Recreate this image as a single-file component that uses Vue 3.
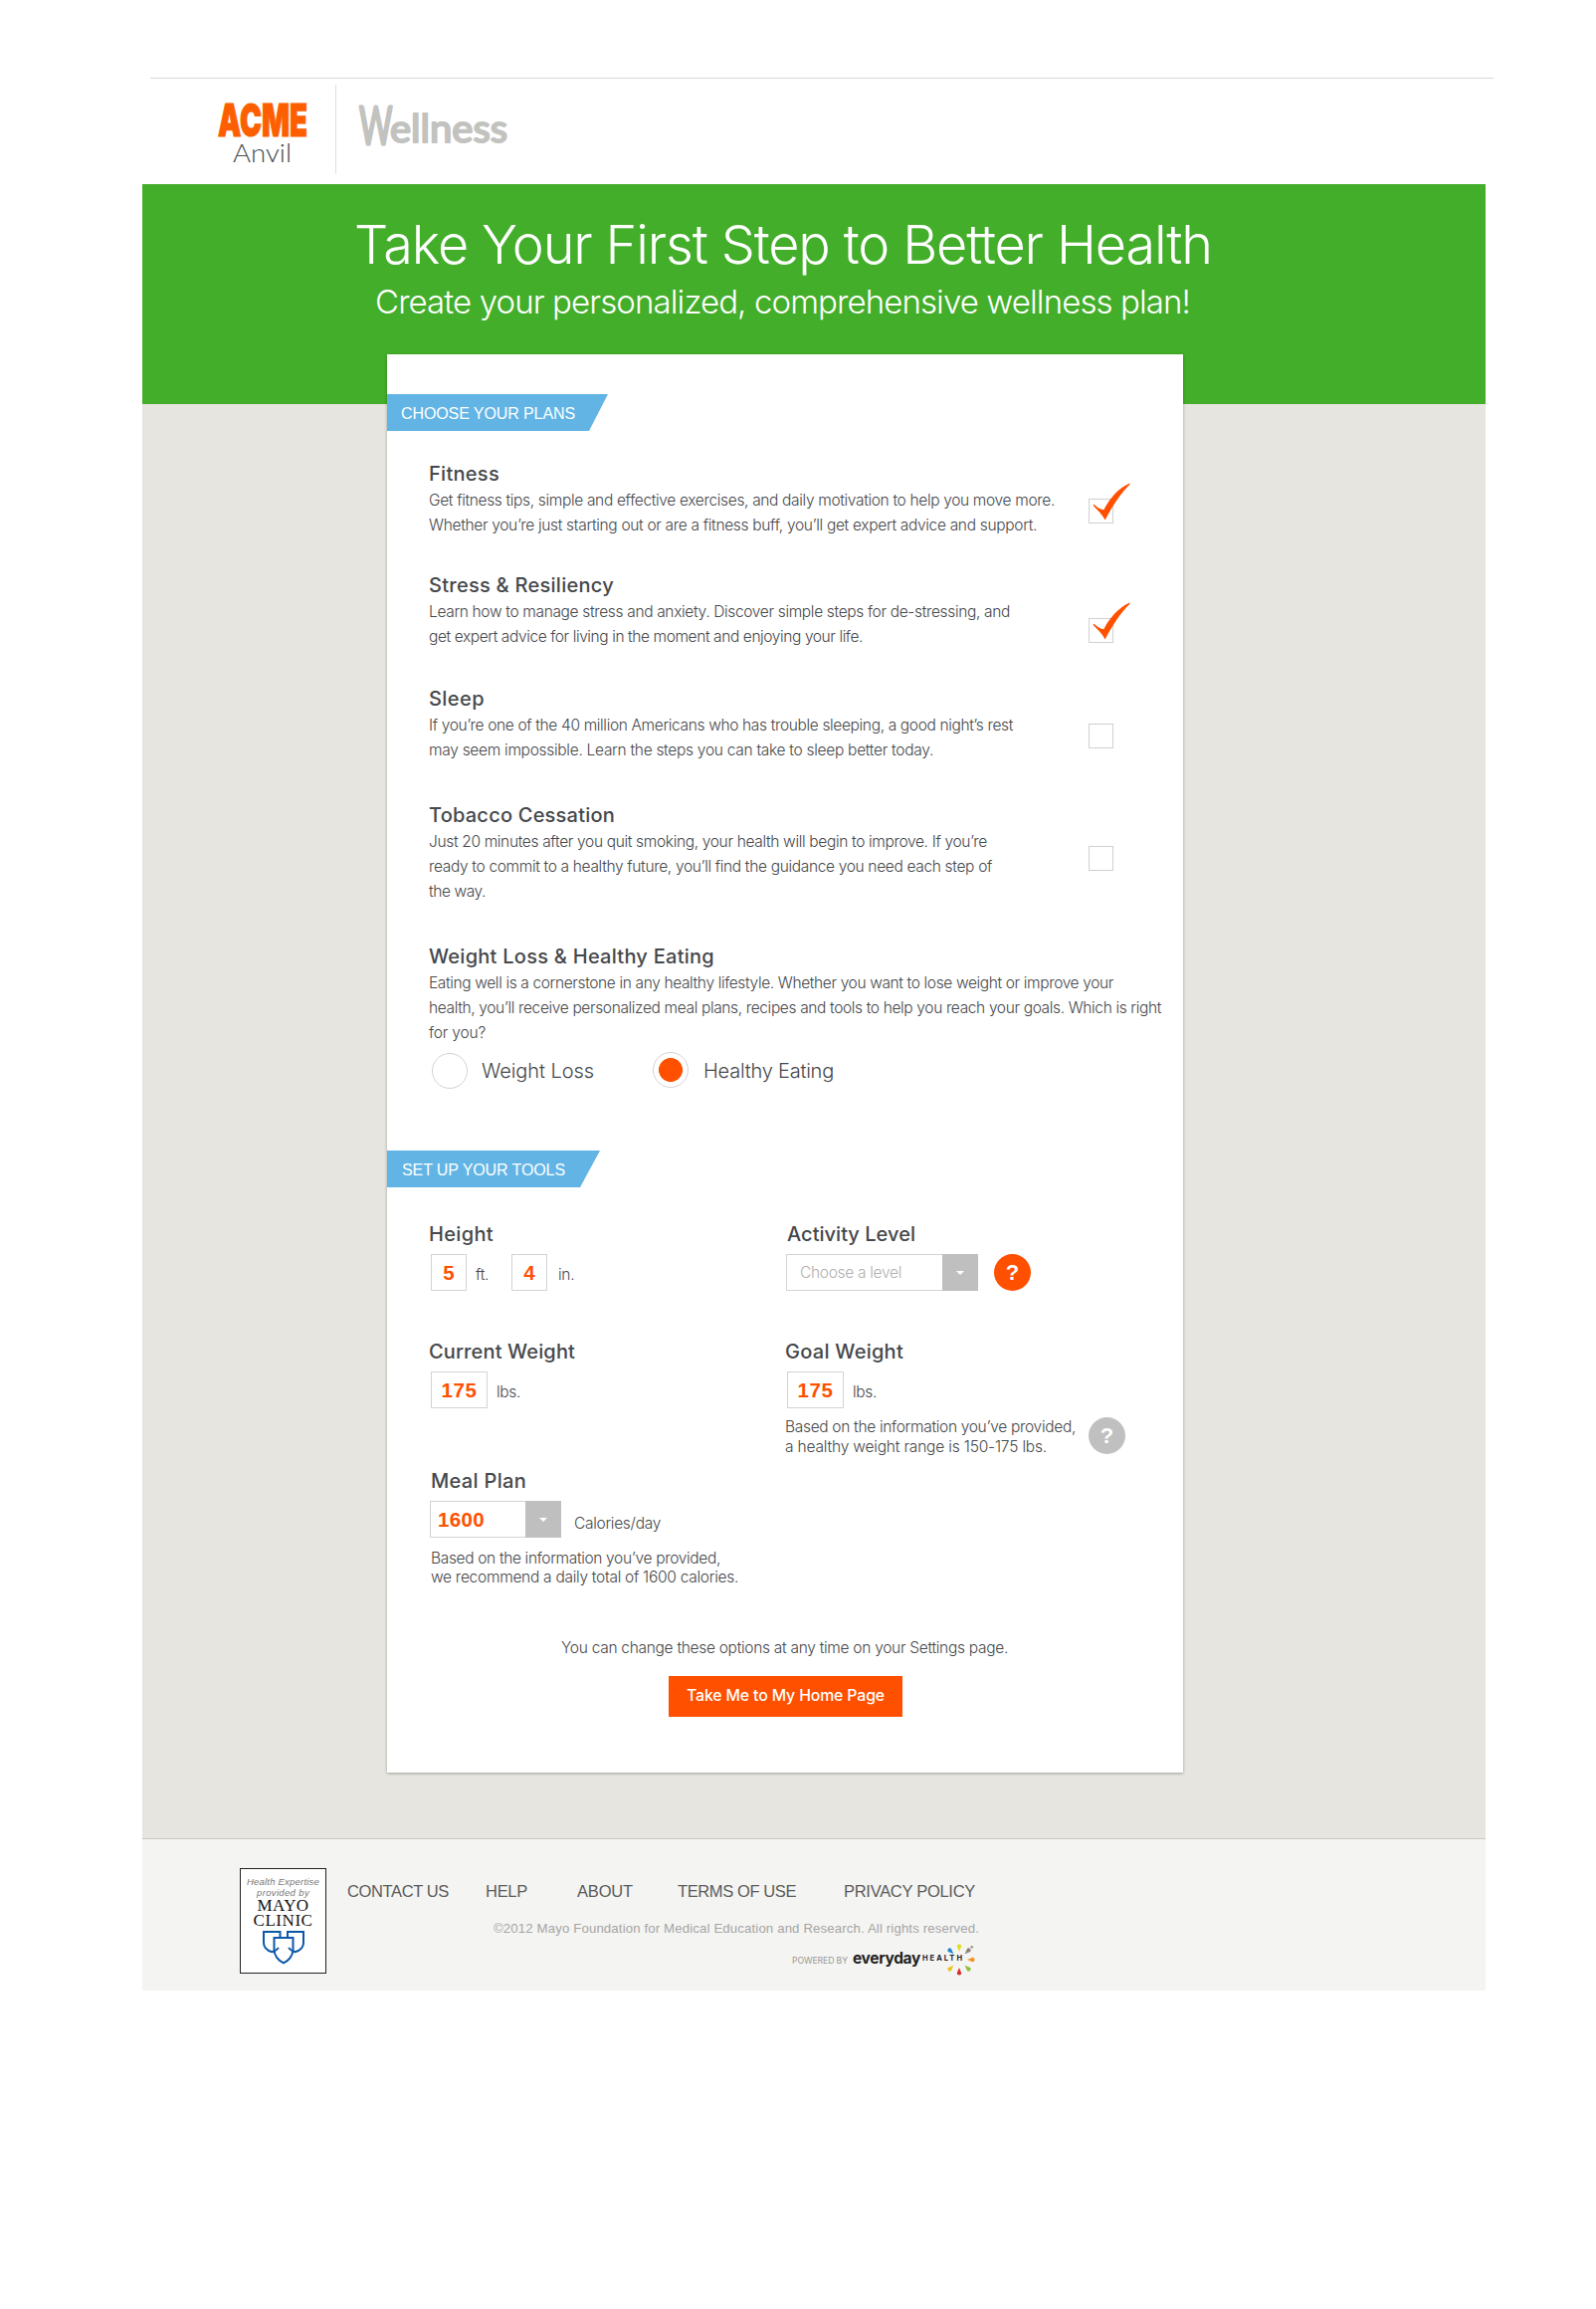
<script setup>
// Tracks a single line of copy so that it fills the given width in pixels.
const vFit = {
  mounted(el, { value }) {
    const count = el.textContent.trim().length
    const width = el.getBoundingClientRect().width
    el.style.letterSpacing = (value - width) / count + 'px'
  },
}

const plans = [
  {
    title: 'Fitness', w: 71, checked: true,
    lines: [
      ['Get fitness tips, simple and effective exercises, and daily motivation to help you move more.', 629],
      ['Whether you’re just starting out or are a fitness buff, you’ll get expert advice and support.', 611],
    ],
  },
  {
    title: 'Stress & Resiliency', w: 186, checked: true,
    lines: [
      ['Learn how to manage stress and anxiety. Discover simple steps for de-stressing, and', 584],
      ['get expert advice for living in the moment and enjoying your life.', 436],
    ],
  },
  {
    title: 'Sleep', w: 56, checked: false,
    lines: [
      ['If you’re one of the 40 million Americans who has trouble sleeping, a good night’s rest', 587],
      ['may seem impossible. Learn the steps you can take to sleep better today.', 507],
    ],
  },
  {
    title: 'Tobacco Cessation', w: 187, checked: false,
    lines: [
      ['Just 20 minutes after you quit smoking, your health will begin to improve. If you’re', 561],
      ['ready to commit to a healthy future, you’ll find the guidance you need each step of', 566],
      ['the way.', 57],
    ],
  },
  {
    title: 'Weight Loss & Healthy Eating', w: 287,
    lines: [
      ['Eating well is a cornerstone in any healthy lifestyle. Whether you want to lose weight or improve your', 688],
      ['health, you’ll receive personalized meal plans, recipes and tools to help you reach your goals. Which is right', 736],
      ['for you?', 57],
    ],
  },
]

const links = [
  ['CONTACT US', 102, 'contact'],
  ['HELP', 42, 'help'],
  ['ABOUT', 56, 'about'],
  ['TERMS OF USE', 119, 'terms'],
  ['PRIVACY POLICY', 132, 'privacy'],
]

const petals = [
  ['#dde01b', 0], ['#8f8277', 45], ['#f7921e', 90], ['#8dbf3a', 135],
  ['#d92b2f', 180], ['#e8c51e', 225], ['#2489cf', 315],
]
</script>

<template>
  <div class="page">
    <div class="hairline"></div>
    <header class="header">
      <svg class="acme" width="92" height="66" viewBox="0 0 92 66">
        <text class="acme-name" x="0" y="34" textLength="90" lengthAdjust="spacingAndGlyphs">ACME</text>
        <text class="acme-sub" x="15" y="60" textLength="59" lengthAdjust="spacingAndGlyphs">Anvil</text>
      </svg>
      <div class="divider"></div>
      <svg class="wellness" width="156" height="56" viewBox="0 0 156 56">
        <text class="script script-cap" transform="translate(2 45) scale(.62 1)">W</text>
        <text class="script" x="33" y="43" textLength="118" lengthAdjust="spacingAndGlyphs">ellness</text>
      </svg>
    </header>

    <section class="hero">
      <h1><span v-fit="862" class="fit">Take Your First Step to Better Health</span></h1>
      <p><span v-fit="819" class="fit">Create your personalized, comprehensive wellness plan!</span></p>
    </section>

    <main class="backdrop">
      <div class="card">
        <h2 class="ribbon ribbon-plans"><span v-fit="175" class="fit">CHOOSE YOUR PLANS</span></h2>
        <div class="plans">
          <div v-for="plan in plans" :key="plan.title" class="plan">
            <div class="plan-copy">
              <h3><span v-fit="plan.w" class="fit">{{ plan.title }}</span></h3>
              <div v-for="line in plan.lines" :key="line[0]" class="line">
                <span v-fit="line[1]" class="fit">{{ line[0] }}</span>
              </div>
            </div>
            <div v-if="plan.checked !== undefined" class="checkbox">
              <svg v-if="plan.checked" class="tick" width="40" height="40" viewBox="0 0 40 40">
                <path d="M1.500 21.800 L2.500 20.800 C6 24 9 25.800 12.300 26.300 C18 15 27 4.500 38.500 -0.500 L38.500 0.800 C30 9 21 22 13.700 36.500 C10.500 30.500 6 26.500 1.500 21.800Z" fill="#ff5000" />
              </svg>
            </div>
          </div>
        </div>
        <div class="radios">
          <span class="radio"></span>
          <span class="radio-label"><span v-fit="113" class="fit">Weight Loss</span></span>
          <span class="radio radio-on"></span>
          <span class="radio-label"><span v-fit="131" class="fit">Healthy Eating</span></span>
        </div>

        <h2 class="ribbon ribbon-tools"><span v-fit="164" class="fit">SET UP YOUR TOOLS</span></h2>
        <div class="tools">
          <div class="tool">
            <h3><span v-fit="65" class="fit">Height</span></h3>
            <div class="controls indent">
              <span class="box digit">5</span><span class="unit ft">ft.</span>
              <span class="box digit">4</span><span class="unit inch">in.</span>
            </div>
          </div>
          <div class="tool right activity">
            <h3><span v-fit="129" class="fit">Activity Level</span></h3>
            <div class="controls">
              <span class="select level"><span v-fit="102" class="fit">Choose a level</span><i class="arrow"></i></span>
              <span class="help orange">?</span>
            </div>
          </div>
          <div class="tool">
            <h3><span v-fit="147" class="fit">Current Weight</span></h3>
            <div class="controls indent">
              <span class="box weight"><span v-fit="36" class="fit">175</span></span>
              <span class="unit lbs">lbs.</span>
            </div>
          </div>
          <div class="tool right">
            <h3><span v-fit="119" class="fit">Goal Weight</span></h3>
            <div class="controls indent">
              <span class="box weight"><span v-fit="36" class="fit">175</span></span>
              <span class="unit lbs">lbs.</span>
            </div>
            <div class="goal-note">
              <div class="note">
                <div><span v-fit="292" class="fit">Based on the information you’ve provided,</span></div>
                <div><span v-fit="263" class="fit">a healthy weight range is 150-175 lbs.</span></div>
              </div>
              <span class="help">?</span>
            </div>
          </div>
          <div class="tool meal">
            <h3><span v-fit="96" class="fit">Meal Plan</span></h3>
            <div class="controls">
              <span class="select calories"><span v-fit="47" class="fit">1600</span><i class="arrow"></i></span>
              <span class="unit per-day"><span v-fit="87" class="fit">Calories/day</span></span>
            </div>
            <div class="note">
              <div><span v-fit="291" class="fit">Based on the information you’ve provided,</span></div>
              <div><span v-fit="309" class="fit">we recommend a daily total of 1600 calories.</span></div>
            </div>
          </div>
        </div>

        <p class="settings"><span v-fit="449" class="fit">You can change these options at any time on your Settings page.</span></p>
        <button class="cta"><span v-fit="199" class="fit">Take Me to My Home Page</span></button>
      </div>
    </main>

    <footer class="footer">
      <div class="mayo">
        <div class="mayo-lead"><span v-fit="73" class="fit">Health Expertise</span></div>
        <div class="mayo-lead"><span v-fit="53" class="fit">provided by</span></div>
        <div class="mayo-name"><span v-fit="52" class="fit">MAYO</span></div>
        <div class="mayo-name"><span v-fit="60" class="fit">CLINIC</span></div>
        <svg width="44" height="36" viewBox="0 0 44 36" fill="none" stroke="#0b57a8" stroke-width="2">
          <path d="M18.500 7V2H2v11c0 5 4 8 8.500 9.300 3-1 5-2.300 6.500-4.300" />
          <path d="M26 7V2h16v11c0 5-4 8-8.500 9.300-3-1-5-2.300-6.500-4.300" />
          <path d="M12.500 8h19v12c0 6-4.500 11-9.500 13.300C17 31 12.500 26 12.500 20Z" />
        </svg>
      </div>
      <div class="foot-main">
        <nav>
          <a v-for="link in links" :key="link[0]" :class="'link-' + link[2]"><span v-fit="link[1]" class="fit">{{ link[0] }}</span></a>
        </nav>
        <div class="copyright"><span v-fit="488" class="fit">©2012 Mayo Foundation for Medical Education and Research. All rights reserved.</span></div>
        <div class="powered">
          <span class="powered-by"><span v-fit="56" class="fit">POWERED BY</span></span>
          <span class="everyday"><span v-fit="68" class="fit">everyday</span></span>
          <span class="health"><span v-fit="42" class="fit">HEALTH</span>
            <svg class="burst" width="34" height="34" viewBox="-17 -17 34 34">
              <path v-for="p in petals" :key="p[1]" :fill="p[0]" :transform="`rotate(${p[1]})`" d="M0 -8 L-2.200 -13.500 Q-2.200 -15.500 0 -15.500 Q2.200 -15.500 2.200 -13.500Z" />
              <circle cx="12.700" cy="-12.700" r="1.400" fill="#a69b92" />
            </svg>
          </span>
        </div>
      </div>
    </footer>
  </div>
</template>

<style>
body { background: #fff; }
</style>

<style scoped>
.page { width: 1604px; height: 2320px; padding-top: 78px; box-sizing: border-box; font-family: Inter, "Liberation Sans", sans-serif; font-weight: 300; font-variant-ligatures: none; color: #46484b; overflow: hidden; }
h1, h2, h3, p { margin: 0; font-weight: inherit; }
.fit { display: inline-block; white-space: nowrap; }
.hairline { width: 1350px; height: 1px; margin-left: 151px; background: #d8d8d8; }
.header { display: flex; height: 106px; padding-left: 219px; }
.acme { margin-top: 24px; flex: none; overflow: visible; }
.acme-name { font: 900 45.500px Inter, sans-serif; fill: #fd5f00; stroke: #fd5f00; stroke-width: 1.200px; }
.acme-sub { font: 300 25px Lato, sans-serif; fill: #4b4d50; }
.divider { width: 1px; height: 90px; margin: 6px 0 0 26px; background: #dedede; }
.wellness { margin: 21px 0 0 21px; flex: none; overflow: visible; }
.script { font: 400 38px Lato, sans-serif; fill: #c2c2bf; stroke: #c2c2bf; stroke-width: 2px; stroke-linejoin: round; }
.script-cap { font-size: 52px; stroke-width: 3px; }

.hero { width: 1350px; height: 221px; margin-left: 143px; background: #43ae2a; color: #fff; }
.hero h1 { padding: 28px 0 0 213px; font-size: 54px; line-height: 66px; font-weight: 300; }
.hero p { padding: 4px 0 0 234px; font-size: 33px; line-height: 40px; font-weight: 300; }

.backdrop { width: 1350px; height: 1441px; margin-left: 143px; background: #e6e5e0; display: flow-root; }
.card { display: flow-root; width: 800px; height: 1425px; margin: -50px 0 0 246px; background: #fff; box-shadow: 0 1px 3px rgba(0, 0, 0, .3); }
.ribbon { height: 37px; font: 400 16px/39px "Liberation Sans", sans-serif; color: #fff; background: #62b4e5; box-sizing: border-box; }
.ribbon-plans { width: 222px; margin-top: 40px; padding-left: 14px; clip-path: polygon(0 0, 100% 0, 203px 100%, 0 100%); }
.ribbon-tools { width: 214px; padding-left: 15px; clip-path: polygon(0 0, 100% 0, 194px 100%, 0 100%); }

h3 { font-size: 20px; line-height: 26px; font-weight: 500; }
.plans { display: grid; grid-template-rows: 112px 114px 117px 142px 110px; margin: 30px 0 0 42px; }
.plan { display: flex; }
.plan-copy { width: 663px; flex: none; }
.plan-copy h3 { margin-bottom: 1px; }
.line { height: 25px; font-size: 15.500px; line-height: 25px; }
.checkbox { position: relative; width: 25px; height: 25px; margin-top: 38px; box-sizing: border-box; border: 1px solid #d0d0d0; }
.plan:nth-child(2) .checkbox { margin-top: 46px; }
.plan:nth-child(4) .checkbox { margin-top: 44px; }
.tick { position: absolute; left: 1.500px; top: -16px; overflow: visible; }

.radios { display: flex; height: 98px; padding-left: 45px; }
.radio { width: 36px; height: 36px; box-sizing: border-box; border: 1px solid #d3d3d3; border-radius: 50%; }
.radio-on { margin: -1px 0 0 59px; background: radial-gradient(circle, #ff5000 11.600px, #fff 12.300px); }
.radio-label { width: 127px; padding-left: 14px; box-sizing: border-box; font-size: 20px; line-height: 36px; }
.radio-label:last-child { width: 150px; padding-left: 15px; }

.tools { display: grid; grid-template-columns: 358px 400px; grid-template-rows: 118px 130px 171px; margin: 34px 0 0 42px; }
.activity { padding-left: 1px; }
.activity h3 { padding-left: 1px; }
.controls { display: flex; height: 37px; margin-top: 7px; padding-left: 1px; }
.indent { padding-left: 2px; }
.box { height: 37px; box-sizing: border-box; border: 1px solid #d3d3d3; text-align: center; font: 700 20.500px/36px "Liberation Sans", sans-serif; color: #ff5000; }
.digit { width: 36px; }
.weight { width: 57px; }
.unit { font-size: 15.500px; line-height: 41px; padding-left: 9px; letter-spacing: -.3px; }
.ft { width: 45px; box-sizing: border-box; }
.inch { padding-left: 11px; }
.select { display: flex; justify-content: space-between; box-sizing: border-box; height: 37px; border: 1px solid #d3d3d3; line-height: 35px; }
.level { width: 193px; padding-left: 13px; font-size: 15.500px; color: #b0b0b0; }
.right .controls:not(.indent) { padding-left: 0; }
.calories { width: 132px; padding-left: 7px; font: 700 20.500px/36px "Liberation Sans", sans-serif; color: #ff5000; }
.arrow { width: 36px; height: 37px; margin: -1px; background: #bfbfbf; display: flex; align-items: center; justify-content: center; }
.arrow::before { content: ""; border: 4.500px solid transparent; border-top: 4.500px solid #fff; border-bottom: 0; }
.help { width: 37px; height: 37px; flex: none; border-radius: 50%; background: #c0c0c0; color: #fff; font: 700 22px/37px "Liberation Sans", sans-serif; text-align: center; }
.orange { margin-left: 16px; background: #ff5000; }
.note { margin: 10.500px 0 0 2px; font-size: 15.500px; line-height: 19.500px; }
.goal-note { display: flex; margin-top: 9px; }
.goal-note .note { width: 293px; margin: 0; }
.goal-note .help { margin: 0 0 0 12px; }
.meal h3 { padding-left: 2px; }
.per-day { padding-left: 13px; line-height: 45px; letter-spacing: 0; }
.settings { padding-left: 175px; font-size: 15.500px; line-height: 20px; }
.cta { display: block; width: 235px; height: 41px; margin: 18px 0 0 283px; padding: 0 0 1px; border: 0; background: #ff5000; color: #fff; font: 500 15.800px/40px Inter, sans-serif; }

.footer { display: flex; width: 1350px; height: 153px; margin-left: 143px; box-sizing: border-box; border-top: 1px solid #c9c9bf; background: #f4f4f2; }
.mayo { width: 87px; height: 106px; margin: 29px 0 0 98px; box-sizing: border-box; border: 1px solid #222; background: #fff; text-align: center; padding-top: 7px; }
.mayo-lead { height: 11px; font: italic 400 9.500px/11px "Liberation Sans", sans-serif; color: #777; }
.mayo-name { height: 14.500px; font: 400 17px/16px "Liberation Serif", serif; color: #111; }
.mayo svg { display: block; margin: 3px auto 0; }
.foot-main { padding: 39px 0 0 21px; }
nav { display: flex; height: 40px; color: #5b5b5b; font: 400 16.500px/26px "Liberation Sans", sans-serif; }
.link-contact { width: 139px; }
.link-help { width: 92px; }
.link-about { width: 101px; }
.link-terms { width: 167px; }
.copyright { margin-left: 147px; color: #a5a5a5; font: 400 13.200px/22px "Liberation Sans", sans-serif; }
.powered { display: flex; align-items: baseline; margin: 9px 0 0 447px; height: 24px; }
.powered-by { width: 61px; font-size: 8.700px; font-weight: 400; color: #999; }
.everyday { width: 70px; font-size: 15.500px; font-weight: 700; color: #222; }
.health { position: relative; font-size: 7.500px; font-weight: 700; color: #222; top: -3px; }
.burst { position: absolute; left: 20px; top: -11px; }
</style>
